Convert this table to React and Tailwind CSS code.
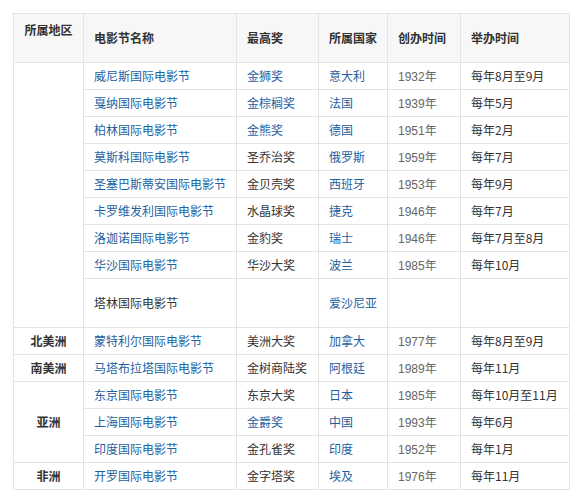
const rows = [
  { region: "", span: 9, name: "威尼斯国际电影节", award: "金狮奖", awardLink: true, country: "意大利", year: "1932年", time: "每年8月至9月" },
  { name: "戛纳国际电影节", award: "金棕榈奖", awardLink: true, country: "法国", year: "1939年", time: "每年5月" },
  { name: "柏林国际电影节", award: "金熊奖", awardLink: true, country: "德国", year: "1951年", time: "每年2月" },
  { name: "莫斯科国际电影节", award: "圣乔治奖", country: "俄罗斯", year: "1959年", time: "每年7月" },
  { name: "圣塞巴斯蒂安国际电影节", award: "金贝壳奖", country: "西班牙", year: "1953年", time: "每年9月" },
  { name: "卡罗维发利国际电影节", award: "水晶球奖", country: "捷克", year: "1946年", time: "每年7月" },
  { name: "洛迦诺国际电影节", award: "金豹奖", country: "瑞士", year: "1946年", time: "每年7月至8月" },
  { name: "华沙国际电影节", award: "华沙大奖", country: "波兰", year: "1985年", time: "每年10月" },
  { name: "塔林国际电影节", nameBlack: true, award: "", country: "爱沙尼亚", year: "", time: "", tall: true },
  { region: "北美洲", span: 1, name: "蒙特利尔国际电影节", award: "美洲大奖", country: "加拿大", year: "1977年", time: "每年8月至9月" },
  { region: "南美洲", span: 1, name: "马塔布拉塔国际电影节", award: "金树商陆奖", country: "阿根廷", year: "1989年", time: "每年11月" },
  { region: "亚洲", span: 3, name: "东京国际电影节", award: "东京大奖", country: "日本", year: "1985年", time: "每年10月至11月" },
  { name: "上海国际电影节", award: "金爵奖", awardLink: true, country: "中国", year: "1993年", time: "每年6月" },
  { name: "印度国际电影节", award: "金孔雀奖", country: "印度", year: "1952年", time: "每年1月" },
  { region: "非洲", span: 1, name: "开罗国际电影节", award: "金字塔奖", country: "埃及", year: "1976年", time: "每年11月" },
];

const cell = "border border-[#e4e4e4] px-[10px] py-0 align-middle whitespace-nowrap";
const link = "text-[#1e5f9f]";

export default function App() {
  return (
    <div
      className="bg-white pl-[13px] pt-[13px] h-[501px] text-[12px] text-[#333]"
      style={{ fontFamily: '"Noto Sans CJK SC", "Liberation Sans", sans-serif' }}
    >
      <table className="table-fixed border-collapse w-[556px]">
        <colgroup>
          <col className="w-[70px]" />
          <col className="w-[153px]" />
          <col className="w-[82px]" />
          <col className="w-[69px]" />
          <col className="w-[73px]" />
          <col className="w-[109px]" />
        </colgroup>
        <thead>
          <tr className="h-[49px] bg-[#f7f7f7] text-left">
            <th className="border border-[#e4e4e4] px-[10px] pt-[7px] align-top text-center font-bold">所属地区</th>
            <th className={cell + " font-bold"}>电影节名称</th>
            <th className={cell + " font-bold"}>最高奖</th>
            <th className={cell + " font-bold"}>所属国家</th>
            <th className={cell + " font-bold"}>创办时间</th>
            <th className={cell + " font-bold"}>举办时间</th>
          </tr>
        </thead>
        <tbody>
          {rows.map((r, i) => (
            <tr key={i} className={r.tall ? "h-[49px]" : "h-[27px]"}>
              {r.span && (
                <td rowSpan={r.span} className={cell + " text-center font-bold"}>
                  {r.region}
                </td>
              )}
              <td className={cell}>
                <span className={r.nameBlack ? "" : link}>{r.name}</span>
              </td>
              <td className={cell}>
                <span className={r.awardLink ? link : ""}>{r.award}</span>
              </td>
              <td className={cell}>
                <span className={link}>{r.country}</span>
              </td>
              <td className={cell + " text-[#666]"}>
                {r.year && (
                  <>
                    <span style={{ fontFamily: '"Liberation Sans", sans-serif' }}>{r.year.slice(0, 4)}</span>
                    {r.year.slice(4)}
                  </>
                )}
              </td>
              <td className={cell}>{r.time}</td>
            </tr>
          ))}
        </tbody>
      </table>
    </div>
  );
}
